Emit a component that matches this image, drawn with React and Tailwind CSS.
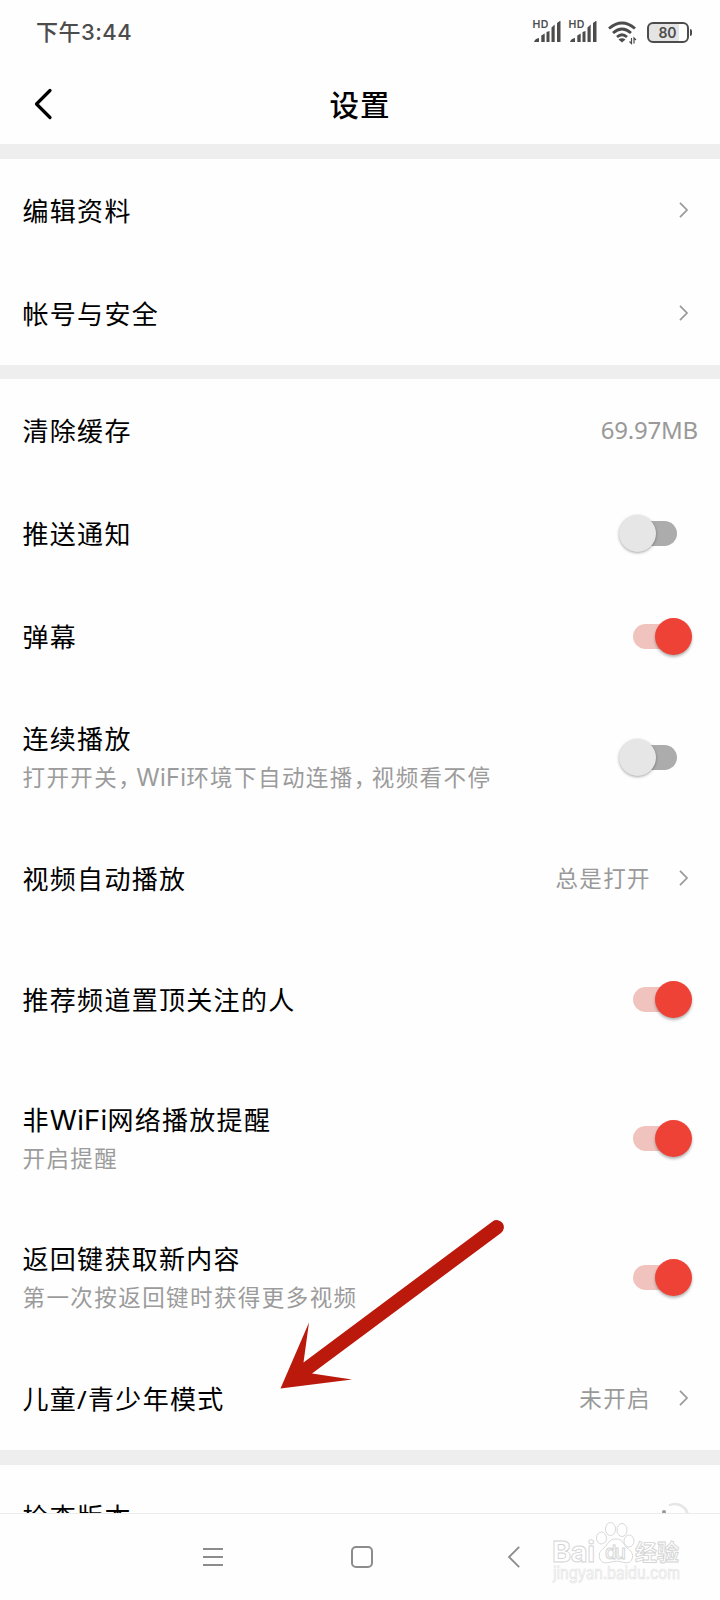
const FONT = "font-['Noto_Sans','Noto_Sans_CJK_SC',sans-serif]";

function Signal() {
  return (
    <div className="relative h-[24px] w-[29px]">
      <span className="absolute -top-[1px] left-0 font-['Inter',sans-serif] text-[10.5px] leading-[10px] font-semibold tracking-[0.4px]">HD</span>
      <svg className="h-[24px] w-[29px]" viewBox="0 0 29 24" fill="currentColor">
        <path d="M1 21q1-3.500 5-4v4zM8.300 14.500l3.400-2V21H8.300zM13.500 11l3-1v11h-3zM18.500 6.500l3.200-3V21h-3.200zM24 2l3.500-2.500V21H24z" />
      </svg>
    </div>
  );
}

function StatusBar() {
  return (
    <div className="flex h-[66px] items-center justify-between pb-px pr-[28px] pl-[36px] text-[#4c4c4c]">
      <div className="font-['Inter','Noto_Sans_CJK_SC',sans-serif] text-[22px] font-medium tracking-[0.45px]">下午3:44</div>
      <div className="flex items-center">
        <div className="mr-[7px]"><Signal /></div>
        <div className="mr-[10px]"><Signal /></div>
        <svg className="mr-[10px] h-[24px] w-[29px]" viewBox="0 0 29 24" fill="none" stroke="currentColor" strokeWidth="2.800">
          <path d="M1 7.500Q14 -3.500 27 7.500M5 12Q14 4 23 12M9 16Q14 11.500 19 16" />
          <path d="M10.500 18.500Q14 15.800 17.500 18.500L14 21.500z" fill="currentColor" stroke="none" />
          <path d="M23.500 17v5.500l-2-2M26 22.500V17l2 2" strokeWidth="1.200" />
        </svg>
        <div className="flex items-center">
          <div className="flex h-[21px] w-[42px] items-center justify-center rounded-[6px] border-[2.5px] border-[#4c4c4c] bg-linear-to-r from-[#e4e4e4] from-80% to-white to-80% font-['Inter',sans-serif] text-[14px] font-semibold">80</div>
          <div className="ml-[1px] h-[7px] w-[2.500px] rounded-r bg-[#4c4c4c]" />
        </div>
      </div>
    </div>
  );
}

function Header() {
  return (
    <div className="grid h-[78px] grid-cols-3 items-center pb-[2px]">
      <svg className="ml-[33px] h-[32px] w-[20px]" viewBox="0 0 20 32" fill="none" stroke="#000" strokeWidth="3.200" strokeLinecap="round" strokeLinejoin="round">
        <path d="M17 2.500L3.500 16L17 29.500" />
      </svg>
      <h1 className="pt-[2px] text-center text-[29.500px] font-medium tracking-[1px] text-black">设置</h1>
    </div>
  );
}

function Divider() {
  return <div className="h-[15px] shrink-0 bg-[#eeeeee]" />;
}

function Chevron() {
  return (
    <svg className="mr-[31px] mb-px h-[16px] w-[10px]" viewBox="0 0 10 16" fill="none" stroke="#999" strokeWidth="1.700">
      <path d="M1 0.800L8 8L1 15.200" />
    </svg>
  );
}

function Toggle({ on }) {
  return (
    <div className={on
      ? "relative mr-[28.500px] flex w-[73px] items-center justify-end"
      : "relative mr-[28.500px] flex w-[73px] items-center"}>
      <div className={on
        ? "absolute left-[14.500px] h-[25px] w-[44px] rounded-full bg-[#f1c3bf]"
        : "absolute left-[14.500px] h-[25px] w-[44px] rounded-full bg-[#acacac]"} />
      <div className={on
        ? "relative size-[37px] rounded-full bg-[#ef4236] shadow-[0_2px_3px_rgba(0,0,0,0.3)]"
        : "relative size-[37px] rounded-full bg-[#e6e6e6] shadow-[0_1px_3px_rgba(0,0,0,0.35)]"} />
    </div>
  );
}

function Row({ title, sub, tall, value, children }) {
  return (
    <div className={tall
      ? "flex h-[139px] items-center justify-between pl-[22.500px]"
      : "flex h-[103px] items-center justify-between pl-[22.500px]"}>
      <div className={sub ? "pt-[3px]" : ""}>
        <div className="text-[26px] leading-[38px] tracking-[1.3px] text-black">{title}</div>
        {sub && <div className="text-[22.500px] leading-[40px] tracking-[1.430px] text-[#9b9b9b]">{sub}</div>}
      </div>
      <div className="flex items-center">
        {value && <span className="mr-[28px] text-[22.500px] leading-[38px] tracking-[1.4px] text-[#999]">{value}</span>}
        {children}
      </div>
    </div>
  );
}

function Latin({ children }) {
  return <span className="font-['Inter',sans-serif] text-[1.060em] leading-none tracking-[0.2px]">{children}</span>;
}

function Comma() {
  return <span className="tracking-[-4.500px]">，</span>;
}

function Watermark() {
  return (
    <svg className="absolute top-[1518px] left-[548px] h-[70px] w-[140px]" viewBox="0 0 140 70" fill="#fff" stroke="#d4d4d4" strokeWidth="0.900">
      <text x="4" y="44" fontSize="29" fontWeight="700" fontFamily="Inter, sans-serif" textLength="43">Bai</text>
      <path d="M68 21c-7 0-8 5-12 9-4 3-6 6-4 11s7 4 11 3 7-1 11 0 8 2 10-3-1-8-5-11c-4-4-4-9-11-9z" />
      <ellipse cx="53.500" cy="20" rx="5" ry="6" />
      <ellipse cx="62.500" cy="11" rx="5" ry="6.500" />
      <ellipse cx="74" cy="12" rx="5" ry="6.500" />
      <ellipse cx="81" cy="23" rx="5" ry="6" />
      <text x="57" y="41" fontSize="18.500" fontWeight="500" fontFamily="Inter, sans-serif" textLength="21">du</text>
      <text x="87" y="42" fontSize="22" fontWeight="700" fontFamily="'Noto Sans CJK SC', sans-serif" textLength="44">经验</text>
      <text x="5" y="61" fontSize="17" fontFamily="Inter, sans-serif" textLength="127" lengthAdjust="spacingAndGlyphs" stroke="#e2e2e2" strokeWidth="0.700">jingyan.baidu.com</text>
    </svg>
  );
}

export default function App() {
  return (
    <div lang="zh-CN" className={`relative flex h-[1600px] w-[720px] flex-col overflow-hidden bg-[#fefefe] ${FONT}`}>
      <StatusBar />
      <Header />
      <Divider />
      <Row title="编辑资料"><Chevron /></Row>
      <Row title="帐号与安全"><Chevron /></Row>
      <div className="h-[14px] bg-[#eeeeee]" />
      <Row title="清除缓存">
        <span className="mr-[22px] mb-px font-['Noto_Sans',sans-serif] text-[24px] leading-[38px] tracking-[-0.2px] text-[#999]">69.97MB</span>
      </Row>
      <Row title="推送通知"><Toggle /></Row>
      <Row title="弹幕"><Toggle on /></Row>
      <Row tall title="连续播放" sub={<>打开开关<Comma /><Latin>WiFi</Latin>环境下自动连播<Comma />视频看不停</>}><Toggle /></Row>
      <Row title="视频自动播放" value="总是打开"><Chevron /></Row>
      <Row tall title="推荐频道置顶关注的人"><Toggle on /></Row>
      <Row tall title={<>非<Latin>WiFi</Latin>网络播放提醒</>} sub="开启提醒"><Toggle on /></Row>
      <Row tall title="返回键获取新内容" sub="第一次按返回键时获得更多视频"><Toggle on /></Row>
      <Row title="儿童/青少年模式" value="未开启"><Chevron /></Row>
      <Divider />
      <div className="h-[48px] shrink-0 overflow-hidden">
        <Row title="检查版本">
          <svg className="mr-[30px] h-[30px] w-[30px]" viewBox="0 0 30 30" fill="none">
            <path d="M9 3.500A13 13 0 0 1 28 14" stroke="#e6e6e6" strokeWidth="2.500" />
            <circle cx="4" cy="10" r="2" fill="#999" />
          </svg>
        </Row>
      </div>
      <div className="flex h-[87px] shrink-0 items-center border-t border-[#ececec] pb-px pl-[203px]">
        <svg className="h-[22px] w-[20px]" viewBox="0 0 20 22" stroke="#8c8c8c" strokeWidth="1.800">
          <path d="M0 3h20M0 11h20M0 19h20" />
        </svg>
        <div className="ml-[128px] size-[22px] rounded-[5px] border-2 border-[#8c8c8c]" />
        <svg className="ml-[134px] h-[22px] w-[14px]" viewBox="0 0 14 22" fill="none" stroke="#8c8c8c" strokeWidth="1.800">
          <path d="M12.200 0.800L2 11L12.200 21.200" />
        </svg>
      </div>
      <svg className="absolute top-[1215px] left-[275px] h-[178px] w-[232px]" viewBox="0 0 232 178" fill="#bc190d">
        <path d="M5.500 173.500L34 107.500L28.500 147.500L217.500 6.500A6.800 6.800 0 0 1 226 18L37 158.500L77 164.500Z" />
      </svg>
      <Watermark />
    </div>
  );
}
